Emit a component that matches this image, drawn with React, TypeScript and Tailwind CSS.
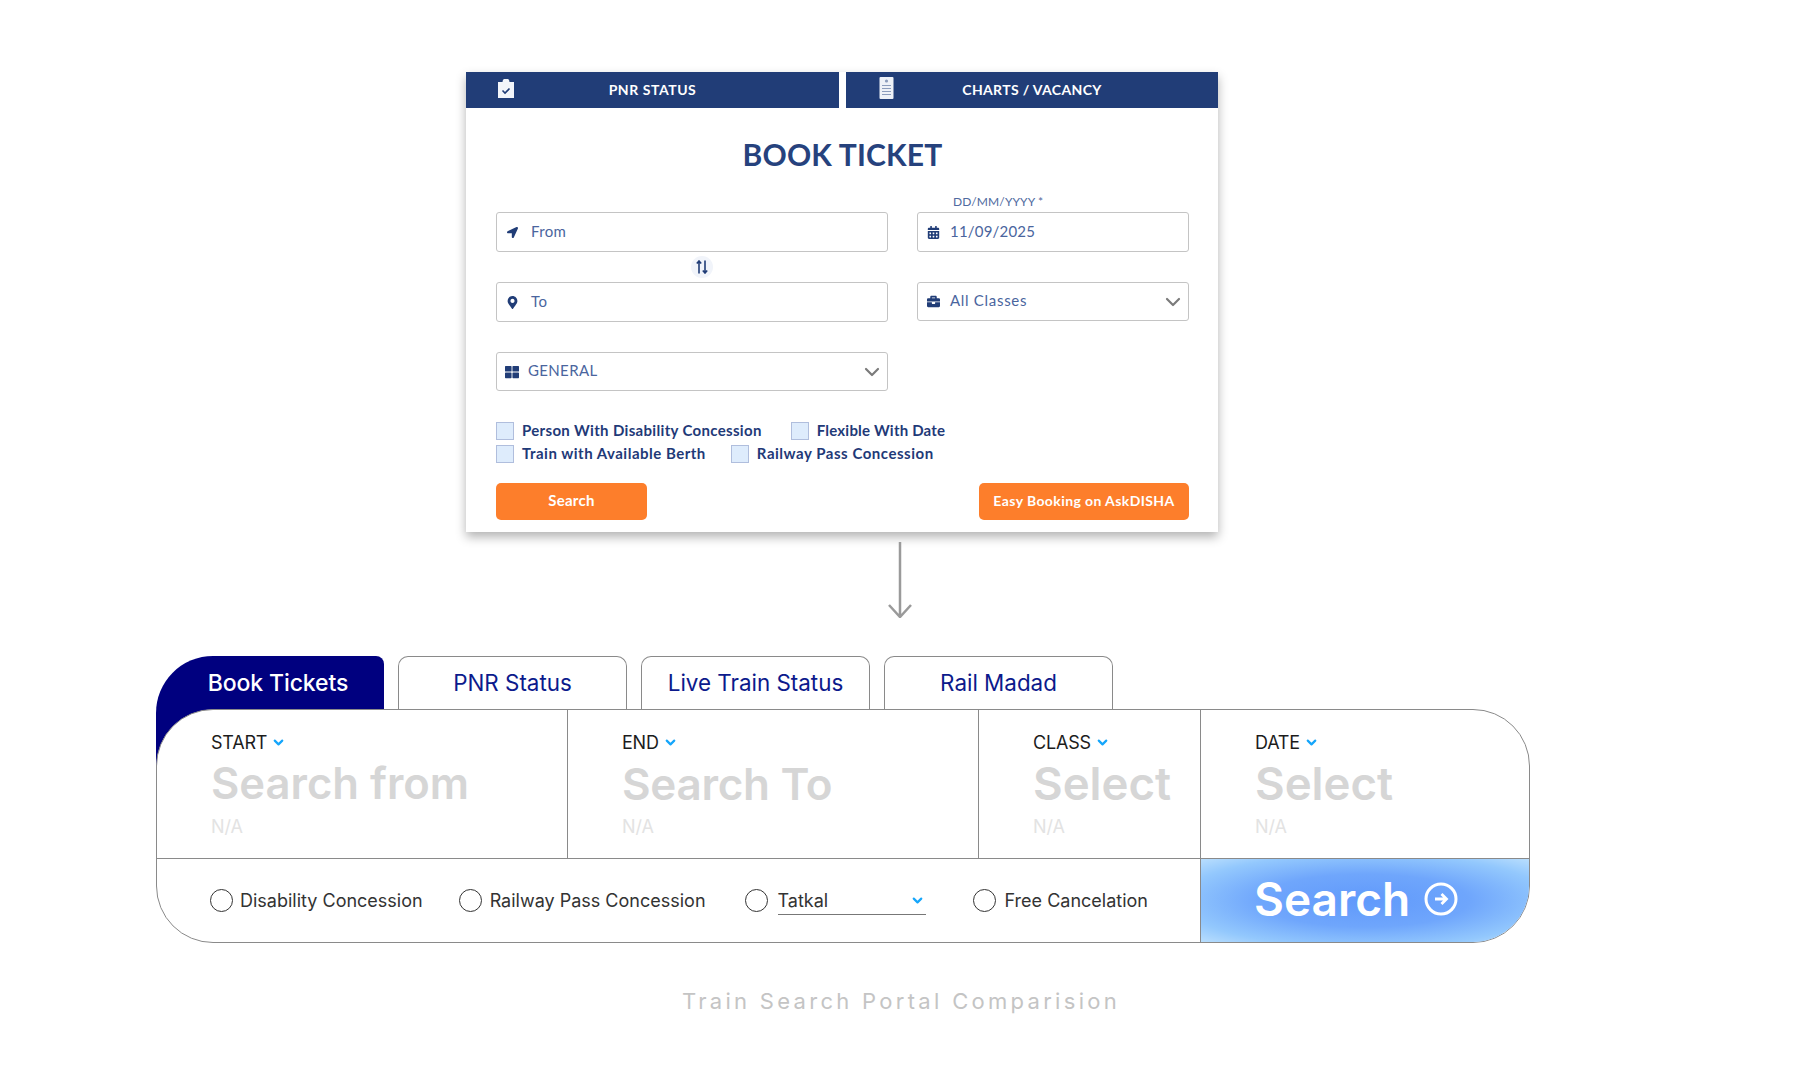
import { ChevronDown } from "lucide-react";
import {
  FaLocationArrow,
  FaMapMarkerAlt,
  FaCalendarAlt,
  FaBriefcase,
  FaThLarge,
} from "react-icons/fa";

function Field({
  icon,
  text,
  chevron,
  className = "",
  textClass = "ml-[11px]",
}: {
  icon: React.ReactNode;
  text: string;
  chevron?: boolean;
  className?: string;
  textClass?: string;
}) {
  return (
    <div
      className={`flex items-center bg-white border border-[#c4c4c4] rounded-[3px] pl-[7px] pr-[3px] text-[#4a659e] text-[15px] tracking-[0.35px] ${className}`}
    >
      <span className="w-[16px] flex justify-center text-[#213d77] text-[13px]">{icon}</span>
      <span className={`flex-1 -mt-[2px] ${textClass}`}>{text}</span>
      {chevron && <ChevronDown className="text-[#7b7b7b]" size={24} strokeWidth={2.2} />}
    </div>
  );
}

function Check({
  label,
  className = "",
  labelClass = "tracking-[0.33px]",
}: {
  label: string;
  className?: string;
  labelClass?: string;
}) {
  return (
    <label className={`flex items-center gap-[8px] ${className}`}>
      <span className="w-[18px] h-[18px] bg-[#deecfc] border border-[#b0bedd]" />
      <span className={`-mt-[2px] text-[15px] font-bold text-[#1f3a78] whitespace-nowrap ${labelClass}`}>{label}</span>
    </label>
  );
}

function Cell({
  label,
  value,
  valueClass = "text-[46px]",
  border = true,
}: {
  label: string;
  value: string;
  valueClass?: string;
  border?: boolean;
}) {
  return (
    <div className={`pl-[54px] pt-[19px] ${border ? "border-r border-[#8a8a8a]" : ""}`}>
      <div className="flex items-center gap-[4px] h-[26px] text-[18px] tracking-[-0.2px] text-[#1c1c1c]">
        {label}
        <ChevronDown className="text-[#16a6fb]" size={15} strokeWidth={3.5} />
      </div>
      <div className={`mt-[1px] leading-[56px] font-semibold text-[#d6d6d6] whitespace-nowrap ${valueClass}`}>
        {value}
      </div>
      <div className="text-[18px] leading-[24px] mt-[3px] text-[#e3e3e3]">N/A</div>
    </div>
  );
}

function Radio({ label, className = "" }: { label: string; className?: string }) {
  return (
    <div className={`flex items-center gap-[7px] ${className}`}>
      <span className="w-[23px] h-[23px] rounded-full border-[1.5px] border-[#333]" />
      {label && <span className="text-[18px] text-[#333] whitespace-nowrap">{label}</span>}
    </div>
  );
}

function PortalTab({ label }: { label: string }) {
  return (
    <div className="w-[229px] h-[53px] flex items-center justify-center border border-b-0 border-[#8a8a8a] rounded-t-[10px] text-[22.4px] text-[#0c1a8c]">
      {label}
    </div>
  );
}

export default function App() {
  return (
    <div className="w-[1800px] h-[1083px] overflow-hidden bg-white pt-[72px] flex flex-col">
      {/* Before */}
      <div
        className="ml-[466px] w-[752px] h-[460px] bg-white shadow-[0_5px_10px_rgba(0,0,0,0.3)]"
        style={{ fontFamily: "Lato, sans-serif" }}
      >
        <div className="flex justify-between h-[36px]">
          <div className="w-[373px] bg-[#213d77] flex items-center pl-[31px] text-white text-[14px] font-bold tracking-[0.55px]">
            <svg width="18" height="20" viewBox="0 0 18 20" className="-mt-[2px]">
              <path d="M1 3h4.5a3.5 3.5 0 0 1 7 0H17v16H1z" fill="#f3f5fa" />
              <path d="M5.5 11.5l2.5 2.5 4.5-4.5" fill="none" stroke="#213d77" strokeWidth="1.6" />
            </svg>
            <span className="flex-1 text-center pr-[49px] -mt-[2px]">PNR STATUS</span>
          </div>
          <div className="w-[372px] bg-[#213d77] flex items-center pl-[33px] text-white text-[14px] font-bold tracking-[0.35px]">
            <svg width="15" height="24" viewBox="0 0 15 24" className="-mt-[4px]">
              <rect x="0.5" y="1" width="14" height="22" rx="1" fill="#eef1f7" />
              <circle cx="7.5" cy="5" r="1.6" fill="#8c9cbc" />
              <path d="M3 9.5h9M3 12.5h9M3 15.5h9M3 18.5h9" stroke="#8c9cbc" strokeWidth="1" />
            </svg>
            <span className="flex-1 text-center pr-[48px] -mt-[2px]">CHARTS / VACANCY</span>
          </div>
        </div>

        <div className="pl-[30px] pr-[29px]">
          <h1 className="h-[104px] pt-[26px] text-center text-[30px] leading-[40px] font-bold text-[#26427d] tracking-[0.2px]">
            BOOK TICKET
          </h1>

          <div className="grid grid-cols-[392px_272px] gap-x-[29px]">
            <Field icon={<FaLocationArrow size={11} />} text="From" className="h-[40px]" />
            <div className="relative">
              <span className="absolute left-[36px] -top-[17px] text-[12px] leading-[14px] text-[#4f6aa0] tracking-[0.1px]">
                DD/MM/YYYY *
              </span>
              <Field
                icon={<FaCalendarAlt size={13} />}
                text="11/09/2025"
                className="h-[40px] !tracking-[0.2px]"
                textClass="ml-[9px]"
              />
            </div>

            <div className="h-[30px] flex items-center pl-[195px]">
              <span className="w-[22px] h-[22px] rounded-full bg-[#f1f4fa] flex items-center justify-center">
                <svg width="12" height="14" viewBox="0 0 12 14" fill="none" stroke="#213d77" strokeWidth="1.6">
                  <path d="M3 13.5V1M.8 3.6L3 1l2.2 2.6M9 .5V13M6.8 10.4L9 13l2.2-2.6" />
                </svg>
              </span>
            </div>
            <div className="h-[30px]" />

            <Field icon={<FaMapMarkerAlt size={13} />} text="To" className="h-[40px]" />
            <Field
              icon={<FaBriefcase size={13} />}
              text="All Classes"
              chevron
              className="h-[39px] !tracking-[0.7px]"
              textClass="ml-[9px]"
            />
          </div>

          <Field
            icon={<FaThLarge size={14} />}
            text="GENERAL"
            chevron
            className="w-[392px] h-[39px] mt-[30px]"
            textClass="ml-[8px]"
          />

          <div className="mt-[31px] flex h-[18px]">
            <Check label="Person With Disability Concession" />
            <Check label="Flexible With Date" className="ml-[29px]" labelClass="tracking-[0.2px]" />
          </div>
          <div className="mt-[5px] flex h-[18px]">
            <Check label="Train with Available Berth" labelClass="tracking-[0.5px]" />
            <Check label="Railway Pass Concession" className="ml-[25px]" labelClass="tracking-[0.53px]" />
          </div>

          <div className="mt-[20px] flex justify-between">
            <div className="w-[151px] h-[37px] pb-[2px] rounded-[5px] bg-[#fd7e2b] flex items-center justify-center text-white text-[15px] font-bold tracking-[0.3px]">
              Search
            </div>
            <div className="w-[210px] h-[37px] pb-[2px] rounded-[5px] bg-[#fd7e2b] flex items-center justify-center text-white text-[14px] font-bold tracking-[0.4px]">
              Easy Booking on AskDISHA
            </div>
          </div>
        </div>
      </div>

      {/* Arrow */}
      <svg width="24" height="76" viewBox="0 0 24 76" fill="none" stroke="#9a9a9a" strokeWidth="2.5" className="ml-[888px] mt-[10px]">
        <path d="M12 0v74M1 63l11 12 11-12" />
      </svg>

      {/* After */}
      <div className="ml-[156px] w-[1374px] mt-[38px]" style={{ fontFamily: "Inter, sans-serif" }}>
        <div className="flex gap-[14px] h-[53px]">
          <div className="w-[228px] h-[113px] bg-[#00007f] rounded-tl-[57px] rounded-tr-[8px] shrink-0">
            <div className="h-[53px] pl-[16px] pt-[1px] flex items-center justify-center text-[23px] font-medium text-white tracking-[-0.1px]">
              Book Tickets
            </div>
          </div>
          <PortalTab label="PNR Status" />
          <PortalTab label="Live Train Status" />
          <PortalTab label="Rail Madad" />
        </div>

        <div className="relative h-[234px] bg-white border border-[#8a8a8a] rounded-[57px] overflow-hidden grid grid-cols-[411px_411px_222px_1fr] grid-rows-[148px_1fr]">
          <Cell label="START" value="Search from" valueClass="text-[43.6px]" />
          <Cell label="END" value="Search To" valueClass="text-[44px] tracking-[-0.3px]" />
          <Cell label="CLASS" value="Select" valueClass="text-[45.6px]" />
          <Cell label="DATE" value="Select" valueClass="text-[45.6px]" border={false} />

          <div className="col-span-3 border-t border-r border-[#8a8a8a] flex items-center pl-[53px]">
            <Radio label="Disability Concession" />
            <Radio label="Railway Pass Concession" className="ml-[36px] !gap-[8px]" />
            <Radio label="" className="ml-[39px]" />
            <div className="ml-[10px] w-[148px] h-[28px] border-b border-[#777] flex items-center justify-between pr-[1px] text-[18px] text-[#333]">
              Tatkal
              <ChevronDown className="text-[#16a6fb]" size={15} strokeWidth={3.5} />
            </div>
            <Radio label="Free Cancelation" className="ml-[47px] !gap-[9px]" />
          </div>
          <div className="border-t border-[#8a8a8a] flex items-center pl-[53px] pb-[3px] gap-[14px] text-white text-[46px] font-semibold bg-[radial-gradient(ellipse_at_center,#6099fb_0%,#6fa6fc_45%,#93c8fd_80%,#b9defd_100%)]">
            Search
            <svg width="34" height="34" viewBox="0 0 34 34" fill="none" stroke="#fff" strokeWidth="3">
              <circle cx="17" cy="17" r="15" />
              <path d="M11 17h11M17.5 12l5 5-5 5" strokeWidth="2.8" />
            </svg>
          </div>
        </div>
      </div>

      <div
        className="mt-[43px] text-center text-[22px] leading-[30px] tracking-[3.3px] text-[#c4c4c4] pl-[2px]"
        style={{ fontFamily: "Inter, sans-serif" }}
      >
        Train Search Portal Comparision
      </div>
    </div>
  );
}
